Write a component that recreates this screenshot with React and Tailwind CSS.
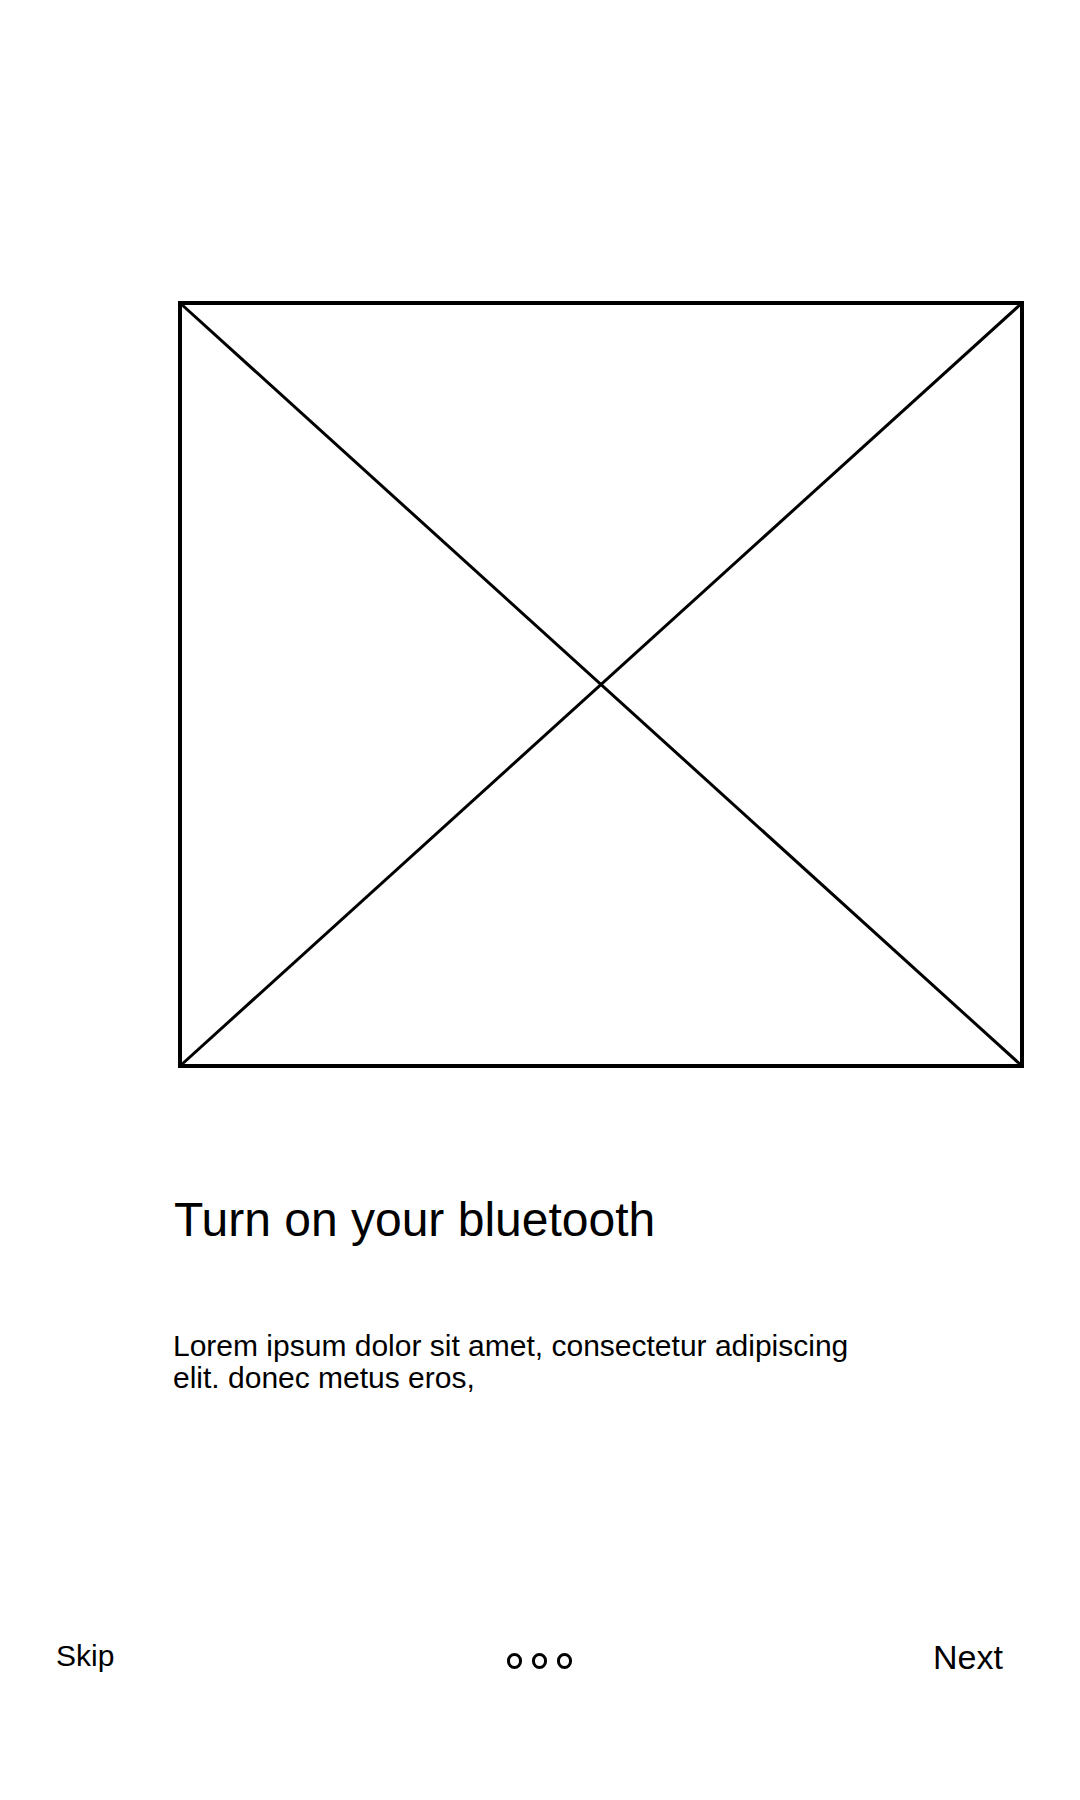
function PlaceholderImage() {
  return (
    <svg width="846" height="767" viewBox="0 0 846 767" className="block" aria-hidden="true">
      <rect x="2" y="2" width="842" height="763" fill="none" stroke="#000" strokeWidth="4" />
      <line x1="2" y1="2" x2="844" y2="765" stroke="#000" strokeWidth="3" />
      <line x1="844" y1="2" x2="2" y2="765" stroke="#000" strokeWidth="3" />
    </svg>
  );
}

function PageDots({ count = 3 }) {
  return (
    <div className="mt-[12px] flex items-center gap-[10px]">
      {Array.from({ length: count }).map((_, i) => (
        <span key={i} className="block h-[16px] w-[15px] rounded-full border-[3px] border-black" />
      ))}
    </div>
  );
}

export default function App() {
  return (
    <div
      className="flex min-h-[1800px] w-[1080px] flex-col bg-white text-black"
      style={{ fontFamily: '"Liberation Sans", Arial, sans-serif' }}
    >
      <div className="ml-[178px] mt-[301px]">
        <PlaceholderImage />
      </div>

      <h1 className="ml-[174px] mt-[128px] text-[48px] font-normal leading-[48px]">Turn on your bluetooth</h1>

      <p className="ml-[173px] mt-[86px] max-w-[700px] text-[30px] leading-[32px]">
        Lorem ipsum dolor sit amet, consectetur adipiscing elit. donec metus eros,
      </p>

      <div className="mt-[247px] grid grid-cols-3 items-start px-[56px]">
        <button type="button" className="justify-self-start text-[30px] leading-[30px]">
          Skip
        </button>
        <div className="justify-self-center">
          <PageDots />
        </div>
        <button type="button" className="-mt-px mr-[21px] justify-self-end text-[34px] leading-[34px]">
          Next
        </button>
      </div>
    </div>
  );
}
